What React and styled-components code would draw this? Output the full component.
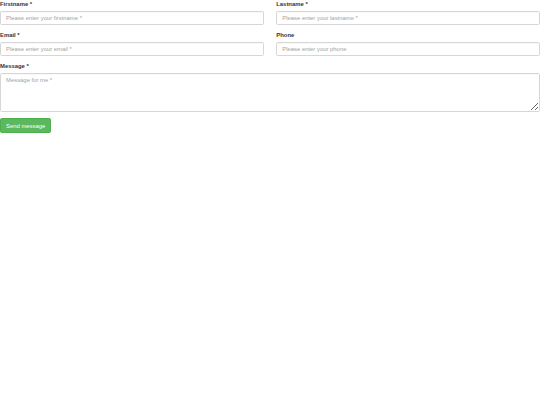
import styled, { createGlobalStyle } from "styled-components";

const GlobalStyle = createGlobalStyle`
  html, body {
    margin: 0;
    padding: 0;
    background: #fff;
  }
  body {
    font-family: "Liberation Sans", Arial, sans-serif;
    color: #333;
  }
`;

const Form = styled.form`
  display: flex;
  flex-direction: column;
  width: 540px;
`;

const Row = styled.div`
  display: grid;
  grid-template-columns: 1fr 1fr;
  column-gap: 12.5px;
`;

const Group = styled.div`
  display: flex;
  flex-direction: column;
  margin-bottom: 6.3px;
`;

const Label = styled.label`
  font-size: 5.9px;
  line-height: 8.4px;
  font-weight: bold;
  color: #333;
  margin-bottom: 2.1px;
`;

const Input = styled.input`
  box-sizing: border-box;
  width: 100%;
  height: 14.3px;
  padding: 2.5px 5px;
  font-family: inherit;
  font-size: 5.9px;
  color: #555;
  background: #fff;
  border: 1px solid #d6d6d6;
  border-radius: 1.7px;
  box-shadow: inset 0 0.4px 0.4px rgba(0, 0, 0, 0.05);
  outline: none;

  &::placeholder {
    color: #a3a3a3;
  }
`;

const TextArea = styled.textarea`
  box-sizing: border-box;
  width: 100%;
  height: 39.5px;
  padding: 2.5px 5px;
  font-family: inherit;
  font-size: 5.9px;
  line-height: 8.4px;
  color: #555;
  background: #fff;
  border: 1px solid #d6d6d6;
  border-radius: 1.7px;
  box-shadow: inset 0 0.4px 0.4px rgba(0, 0, 0, 0.05);
  outline: none;
  resize: vertical;
  display: block;

  &::placeholder {
    color: #a3a3a3;
  }
`;

const Button = styled.button`
  align-self: flex-start;
  box-sizing: border-box;
  height: 14.3px;
  padding: 0 5px;
  font-family: inherit;
  font-size: 5.9px;
  color: #fff;
  background: #5cb85c;
  border: 1px solid #4cae4c;
  border-radius: 1.7px;
  cursor: pointer;
`;

export default function App() {
  return (
    <>
      <GlobalStyle />
      <Form onSubmit={(e) => e.preventDefault()}>
        <Row>
          <Group>
            <Label htmlFor="firstname">Firstname *</Label>
            <Input id="firstname" type="text" placeholder="Please enter your firstname *" />
          </Group>
          <Group>
            <Label htmlFor="lastname">Lastname *</Label>
            <Input id="lastname" type="text" placeholder="Please enter your lastname *" />
          </Group>
        </Row>
        <Row>
          <Group>
            <Label htmlFor="email">Email *</Label>
            <Input id="email" type="email" placeholder="Please enter your email *" />
          </Group>
          <Group>
            <Label htmlFor="phone">Phone</Label>
            <Input id="phone" type="tel" placeholder="Please enter your phone" />
          </Group>
        </Row>
        <Group>
          <Label htmlFor="message">Message *</Label>
          <TextArea id="message" placeholder="Message for me *" />
        </Group>
        <Button type="submit">Send message</Button>
      </Form>
    </>
  );
}
